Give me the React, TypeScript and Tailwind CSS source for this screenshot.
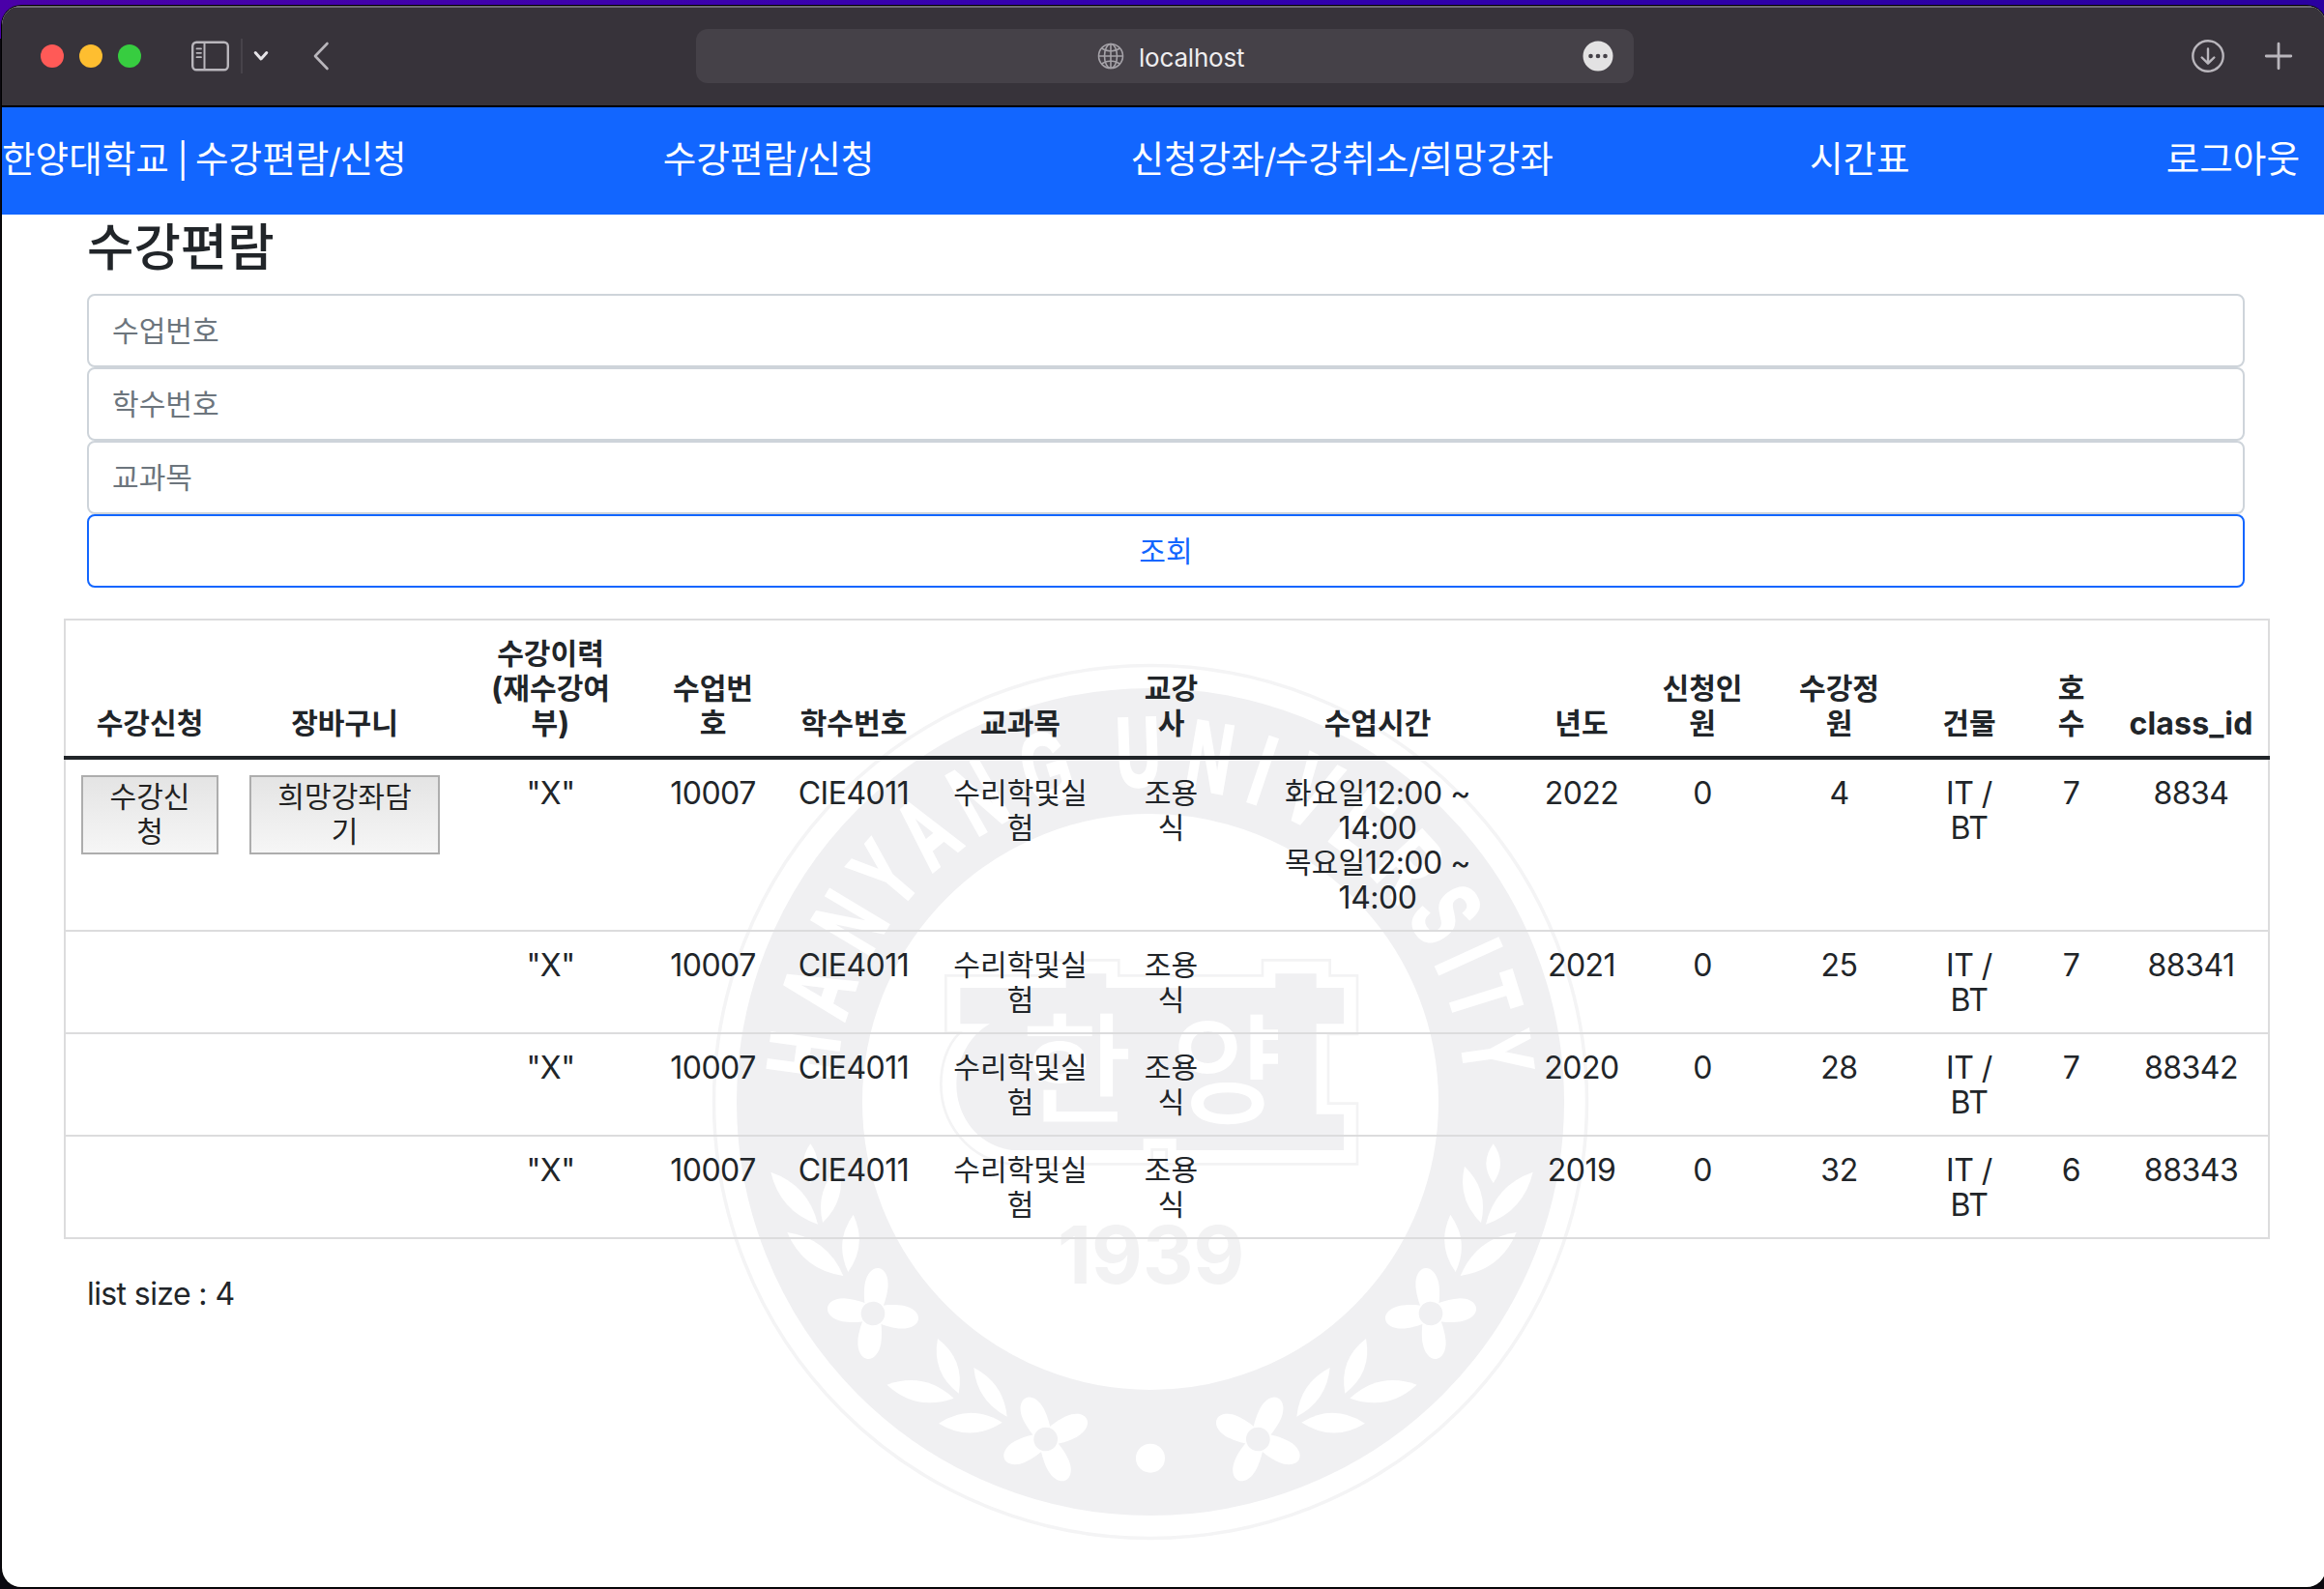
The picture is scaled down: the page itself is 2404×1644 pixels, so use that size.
import React from "react";

/* Hangul runs are set slightly smaller than the Latin text beside them. */
function T({ children, latin = "" }: { children: string; latin?: string }) {
  const parts = children.split(/([가-힣]+)/).filter(Boolean);
  return (
    <>
      {parts.map((p, i) =>
        /[가-힣]/.test(p) ? (
          <span key={i} className="align-[1px] text-[0.94em] leading-none tracking-normal">{p}</span>
        ) : (
          <span key={i} className={latin}>{p}</span>
        )
      )}
    </>
  );
}

const GRID =
  "grid grid-cols-[174px_229px_197px_139px_152px_193px_119px_308px_114px_136px_147px_122px_89px_159px]";

const HEADERS = [
  ["수강신청"],
  ["장바구니"],
  ["수강이력", "(재수강여", "부)"],
  ["수업번", "호"],
  ["학수번호"],
  ["교과목"],
  ["교강", "사"],
  ["수업시간"],
  ["년도"],
  ["신청인", "원"],
  ["수강정", "원"],
  ["건물"],
  ["호", "수"],
  ["class_id"],
];

const TIMES = ["화요일12:00 ~", "14:00", "목요일12:00 ~", "14:00"];

const ROWS = [
  { times: TIMES, year: "2022", cap: "4", room: "7", id: "8834", actions: true },
  { times: [], year: "2021", cap: "25", room: "7", id: "88341", actions: false },
  { times: [], year: "2020", cap: "28", room: "7", id: "88342", actions: false },
  { times: [], year: "2019", cap: "32", room: "6", id: "88343", actions: false },
];

function Lines({ lines }: { lines: string[] }) {
  return (
    <>
      {lines.map((l, i) => (
        <div key={i} className="h-9 whitespace-nowrap pt-px">
          <T>{l}</T>
        </div>
      ))}
    </>
  );
}

function Cell({ lines }: { lines: string[] }) {
  return (
    <div role="cell" className="flex flex-col items-center py-4">
      <Lines lines={lines} />
    </div>
  );
}

function ActionButton({ lines }: { lines: string[] }) {
  return (
    <div role="cell" className="px-4 py-4">
      <button className="flex h-[82px] w-full flex-col items-center justify-center border-2 border-[#adadad] bg-linear-to-b from-[#e4e4e4] to-[#f6f6f6] pb-[2px] text-[#222]">
        <Lines lines={lines} />
      </button>
    </div>
  );
}

const LETTERS: [string, number][] = [
  ["H", -82.3], ["A", -71.5], ["N", -59.1], ["Y", -49.4], ["A", -39.7], ["N", -29.4],
  ["G", -17.3], ["U", -2], ["N", 9.8], ["I", 18.7], ["V", 27.5], ["E", 37.4],
  ["R", 47.6], ["S", 57.6], ["I", 65.4], ["T", 72.6], ["Y", 82],
];

const LEAVES: [number, number, number, number, number][] = [
  [355, 190, 355, 312, 44],
  [232, 278, 378, 440, 60],
  [444, 260, 393, 435, 52],
  [283, 465, 457, 600, 62],
  [488, 410, 472, 588, 52],
  [750, 795, 815, 965, 56],
  [592, 938, 800, 980, 64],
  [862, 885, 965, 1037, 50],
  [753, 1058, 950, 1055, 62],
];

function leaf([x1, y1, x2, y2, w]: [number, number, number, number, number]) {
  const dx = x2 - x1;
  const dy = y2 - y1;
  const l = Math.hypot(dx, dy);
  const nx = (-dy / l) * w;
  const ny = (dx / l) * w;
  const mx = (x1 + x2) / 2;
  const my = (y1 + y2) / 2;
  return `M${x1} ${y1}Q${mx + nx} ${my + ny} ${x2} ${y2}Q${mx - nx} ${my - ny} ${x1} ${y1}Z`;
}

function Flower({ x, y, r }: { x: number; y: number; r: number }) {
  return (
    <g transform={`translate(${x} ${y}) rotate(${r})`}>
      {[0, 90, 180, 270].map((a) => (
        <path
          key={a}
          transform={`rotate(${a})`}
          d="M0 20C26 16 38 -60 36 -90C34 -122 18 -142 0 -142C-18 -142 -34 -122 -36 -90C-38 -60 -26 16 0 20Z"
          fill="#fff"
        />
      ))}
      <circle r="37" fill="#f0f0f2" />
    </g>
  );
}

function Wreath() {
  return (
    <g fill="#fff">
      {LEAVES.map((l, i) => (
        <path key={i} d={leaf(l)} />
      ))}
      <Flower x={549} y={717} r={7} />
      <Flower x={1085} y={1107} r={-26} />
    </g>
  );
}

function Seal() {
  return (
    <svg viewBox="730 680 920 920" className="absolute left-[728px] top-[569px] h-[920px] w-[920px]">
      <circle cx="1190" cy="1140" r="451.5" fill="none" stroke="#f4f4f5" strokeWidth="3.5" />
      <circle cx="1190" cy="1140" r="363" fill="none" stroke="#f0f0f2" strokeWidth="130" />
      {LETTERS.map(([c, a], i) => (
        <text
          key={i}
          transform={`translate(1190 1140) rotate(${a}) translate(0 -327) scale(.62 1)`}
          textAnchor="middle"
          fontSize="102"
          fontWeight="700"
          fill="#fff"
          stroke="#fff"
          strokeWidth="3"
          className="font-['Liberation_Sans',sans-serif]"
        >
          {c}
        </text>
      ))}
      <g transform="translate(720 1120) scale(.33333)">
        <Wreath />
        <circle cx="1410" cy="1166" r="45" fill="#fff" />
      </g>
      <g transform="translate(1663 1120) scale(-.33333 .33333)">
        <Wreath />
      </g>
      <g transform="translate(950 970) scale(.33333)">
        <path
          d="M85 118H418V70H622V118H1068V70H1277V118H1362V300H1272V515H1362V703H770V658H725V703H290C150 690 70 570 70 455C70 395 88 335 128 296H85Z"
          fill="none"
          stroke="#f3f3f4"
          strokeWidth="8"
        />
        <path
          d="M130 156H458V112H583V156H1108V112H1235V156H1320V268H1235V548H1320V660H800V624H698V660H290C180 645 118 550 118 455C118 380 160 300 222 268H130Z"
          fill="#f0f0f2"
        />
        <g fill="#fff" fontSize="372" fontWeight="500" textAnchor="middle" className="font-['Noto_Sans_CJK_KR',sans-serif]">
          <text x="492" y="545">한</text>
          <text x="958" y="550">양</text>
        </g>
        <text
          x="722"
          y="1075"
          textAnchor="middle"
          fontSize="248"
          fontWeight="700"
          textLength="580"
          lengthAdjust="spacingAndGlyphs"
          fill="#f2f2f3"
          className="font-['Inter',sans-serif]"
        >
          1939
        </text>
      </g>
    </svg>
  );
}

function Toolbar() {
  return (
    <header className="flex h-[105px] shrink-0 items-center border-b-2 border-black bg-[#37333a] shadow-[inset_0_2px_0_#6d6a70]">
      <div className="ml-[40px] flex w-[104px] shrink-0 justify-between">
        <i className="size-6 rounded-full bg-[#ff5a57]" />
        <i className="size-6 rounded-full bg-[#febe30]" />
        <i className="size-6 rounded-full bg-[#37cd40]" />
      </div>
      <svg viewBox="0 0 40 32" className="ml-[51px] h-8 w-10 shrink-0" fill="none" stroke="#b9b6bc" strokeWidth="2.4" strokeLinecap="round">
        <rect x="2.2" y="1.8" width="36.6" height="28.4" rx="4" />
        <path d="M14.5 2V30" strokeWidth="2" />
        <path d="M6.5 8.4h4.5M6.5 12.8h4.5M6.5 17.2h4.5" strokeWidth="1.8" />
      </svg>
      <i className="ml-[12px] h-9 w-[2px] bg-[#47434a]" />
      <svg viewBox="0 0 16 12" className="ml-[11px] h-3 w-4 shrink-0" fill="none" stroke="#e6e4e8" strokeWidth="3" strokeLinecap="round" strokeLinejoin="round">
        <path d="M2.2 2.5L8 9L13.8 2.5" />
      </svg>
      <svg viewBox="0 0 20 32" className="ml-[44px] h-8 w-5 shrink-0" fill="none" stroke="#b9b6bc" strokeWidth="2.6" strokeLinecap="round" strokeLinejoin="round">
        <path d="M16.5 3L4 16L16.5 29" />
      </svg>
      <div className="ml-[378px] flex h-14 w-[970px] shrink-0 items-center rounded-xl bg-[#454148]">
        <svg viewBox="0 0 28 28" className="ml-[415px] size-7 shrink-0" fill="none" stroke="#a5a2a8" strokeWidth="1.6">
          <circle cx="14" cy="14" r="12.5" />
          <ellipse cx="14" cy="14" rx="6.5" ry="12.5" />
          <path d="M14 1.5V26.5M1.5 14H26.5M4.5 6Q14 12 23.5 6M4.5 22Q14 16 23.5 22" />
        </svg>
        <span className="ml-[15px] w-[120px] pt-[4px] text-[26px] tracking-[-0.2px] text-[#eeedef]">localhost</span>
        <svg viewBox="0 0 32 32" className="ml-[339px] size-8 shrink-0">
          <circle cx="16" cy="16" r="15.5" fill="#e3e2e3" />
          <g fill="#454148">
            <circle cx="8.5" cy="16" r="2.3" />
            <circle cx="16" cy="16" r="2.3" />
            <circle cx="23.5" cy="16" r="2.3" />
          </g>
        </svg>
      </div>
      <svg viewBox="0 0 36 36" className="ml-[576px] size-9 shrink-0" fill="none" stroke="#b9b6bc" strokeWidth="2.4" strokeLinecap="round" strokeLinejoin="round">
        <circle cx="18" cy="18" r="15.7" />
        <path d="M18 10.500V25M11.7 19.5L18 25.7L24.3 19.5" />
      </svg>
      <svg viewBox="0 0 30 30" className="ml-[40px] size-[30px] shrink-0" fill="none" stroke="#b9b6bc" strokeWidth="2.8" strokeLinecap="round">
        <path d="M15 2.2V27.8M2.2 15H27.8" />
      </svg>
    </header>
  );
}

const NAV = ["한양대학교 | 수강편람/신청", "수강편람/신청", "신청강좌/수강취소/희망강좌", "시간표", "로그아웃"];

export default function App() {
  return (
    <div className="h-[1644px] w-[2404px] overflow-hidden bg-linear-to-r from-[#4a00a8] via-[#3200b0] to-[#2a00a0] font-['Inter','Noto_Sans_CJK_KR',sans-serif] text-[#212529]">
      <div className="h-[1644px] w-[2404px] overflow-hidden bg-[linear-gradient(to_bottom,transparent_40px,#0b0910_40px)] pl-[2px] pt-[6px]">
        <div className="flex h-[1636px] w-[2404px] flex-col overflow-hidden rounded-[20px] bg-white shadow-[0_0_0_1px_#000]">
          <Toolbar />
          <main className="relative flex-1">
            <Seal />
            <div className="relative">
              <nav className="flex h-[111px] w-full items-center justify-between bg-[#1266ff] pb-[3px] pr-[27px] text-[40px] text-white">
                {NAV.map((n) => (
                  <a key={n} className="whitespace-nowrap">
                    <T latin="text-[35px] tracking-[-1.4px]">{n}</T>
                  </a>
                ))}
              </nav>
              <section className="ml-[88px] w-[2232px]">
                <h2 className="h-[82px] pt-[1px] text-[56px] font-medium leading-[66px]">
                  <T>수강편람</T>
                </h2>
                {["수업번호", "학수번호", "교과목"].map((p) => (
                  <div key={p} className="flex h-[76px] items-center rounded-lg border-2 border-[#ced4da] bg-white px-6 text-[32px] text-[#6c757d]">
                    <T>{p}</T>
                  </div>
                ))}
                <button className="flex h-[76px] w-full items-center justify-center rounded-lg border-2 border-[#1266ff] text-[32px] text-[#1266ff]">
                  <T>조회</T>
                </button>
              </section>
              <div role="table" className="ml-[64px] mt-8 w-[2282px] text-[32px] leading-9 tracking-[-0.5px]">
                <div role="row" className={`${GRID} h-[142px] border-x-2 border-t-2 border-[#dcdcdd] pt-4 font-bold tracking-[0.2px]`}>
                  {HEADERS.map((h, i) => (
                    <div key={i} role="columnheader" className="flex h-[108px] flex-col items-center justify-end">
                      <Lines lines={h} />
                    </div>
                  ))}
                </div>
                <div className="h-1 bg-[#212529]" />
                {ROWS.map((r) => (
                  <div key={r.id} role="row" className={`${GRID} border-x-2 border-b-2 border-[#dcdcdd]`}>
                    {r.actions ? <ActionButton lines={["수강신", "청"]} /> : <Cell lines={[]} />}
                    {r.actions ? <ActionButton lines={["희망강좌담", "기"]} /> : <Cell lines={[]} />}
                    <Cell lines={['"X"']} />
                    <Cell lines={["10007"]} />
                    <Cell lines={["CIE4011"]} />
                    <Cell lines={["수리학및실", "험"]} />
                    <Cell lines={["조용", "식"]} />
                    <Cell lines={r.times} />
                    <Cell lines={[r.year]} />
                    <Cell lines={["0"]} />
                    <Cell lines={[r.cap]} />
                    <Cell lines={["IT /", "BT"]} />
                    <Cell lines={[r.room]} />
                    <Cell lines={[r.id]} />
                  </div>
                ))}
              </div>
              <p className="ml-[88px] mt-[33px] text-[32px] leading-[48px] tracking-[-0.6px]">list size : 4</p>
            </div>
          </main>
        </div>
      </div>
    </div>
  );
}
